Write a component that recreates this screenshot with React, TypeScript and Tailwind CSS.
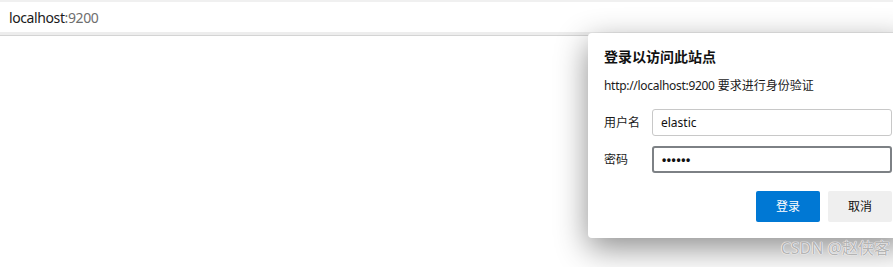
import React from "react";

const font = { fontFamily: '"Segoe UI", "Noto Sans", "Noto Sans CJK SC", sans-serif' };

function AddressBar() {
  return (
    <div className="border-b border-[#d4d4d4]">
      <div className="h-[2px] bg-[#f0f0f0]" />
      <div className="flex h-[30px] items-center bg-white pl-[9px] text-[14px] tracking-[-0.4px]">
        <span className="text-[#1a1a1a]">localhost</span>
        <span className="text-[#6e6e6e]">:9200</span>
      </div>
      <div className="h-[3px] bg-[#ededed]" />
    </div>
  );
}

function LoginDialog() {
  return (
    <div className="absolute left-[588px] top-[33px] w-[320px] rounded-[4px] bg-white px-[16px] pb-[16px] pt-[14px] shadow-[0_10px_32px_rgba(0,0,0,0.45)]">
      <h1 className="text-[14px] font-bold leading-[20px] text-[#111]">
        登录以访问此站点
      </h1>
      <p className="mt-[11px] text-[12px] leading-[16px] text-[#1a1a1a]">
        <span className="tracking-[-0.3px]">http://localhost:9200</span> 要求进行身份验证
      </p>

      <div className="mt-[15px] flex flex-col gap-[10px]">
        <div className="flex items-center">
          <label className="w-[48px] text-[12px] text-[#1a1a1a]">用户名</label>
          <div className="flex h-[27px] w-[240px] items-center rounded-[3px] border border-[#c8c8c8] px-[8px] text-[12px] text-[#111]">
            elastic
          </div>
        </div>
        <div className="flex items-center">
          <label className="w-[48px] text-[12px] text-[#1a1a1a]">密码</label>
          <div className="flex h-[27px] w-[240px] items-center rounded-[3px] border-2 border-[#7d8185] px-[8px] text-[#111]">
            <span className="font-['Liberation_Sans'] text-[12px] font-bold tracking-[0.6px]">••••••</span>
          </div>
        </div>
      </div>

      <div className="mt-[18px] flex justify-end gap-[8px]">
        <button className="h-[31px] w-[64px] rounded-[2px] bg-[#0078d4] text-[12px] text-white">
          登录
        </button>
        <button className="h-[31px] w-[64px] rounded-[2px] bg-[#efefef] text-[12px] text-[#111]">
          取消
        </button>
      </div>
    </div>
  );
}

export default function App() {
  return (
    <div className="relative h-[267px] w-[893px] overflow-hidden bg-white" style={font}>
      <AddressBar />
      <LoginDialog />
      <div className="absolute bottom-[7px] right-[3px] text-[16px] text-[#b4b4b4] [text-shadow:0_0_1px_#fff,0_0_1px_#fff,0_0_1px_#fff]">
        CSDN @赵侠客
      </div>
    </div>
  );
}
